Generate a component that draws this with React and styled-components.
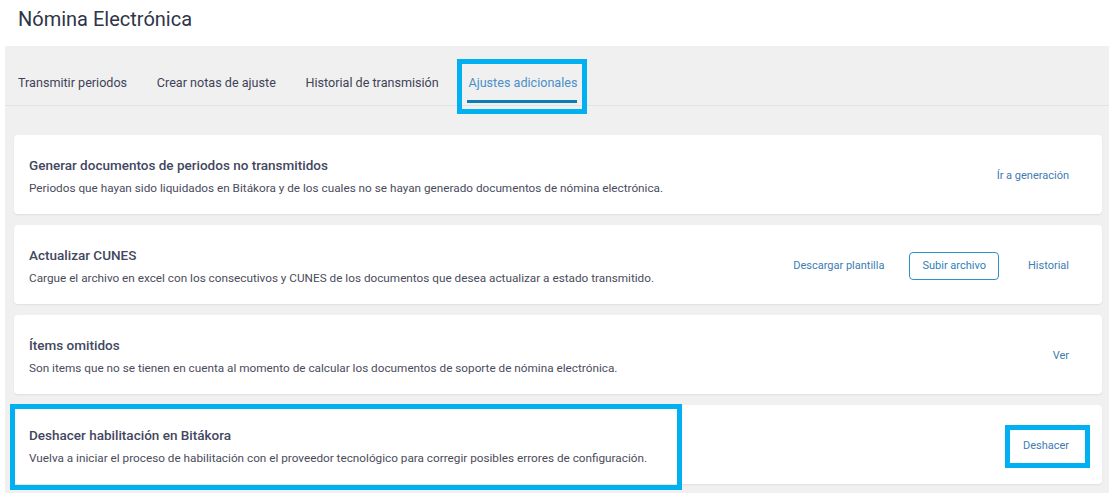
import React from "react";
import styled, { createGlobalStyle } from "styled-components";

const GlobalStyle = createGlobalStyle`
  html, body { margin: 0; padding: 0; background: #ffffff; }
  body { font-family: Roboto, "Noto Sans", Arial, sans-serif; -webkit-font-smoothing: antialiased; }
  * { box-sizing: border-box; }
`;

const Page = styled.div`
  width: 1113px;
  padding: 0 4px 0 5px;
`;

const Header = styled.header`
  height: 46px;
  padding: 6px 0 0 13px;
`;

const Title = styled.h1`
  margin: 0;
  font-size: 20px;
  line-height: 26px;
  font-weight: 400;
  color: #2f3448;
`;

const Panel = styled.section`
  background: #f0f0f0;
  padding-bottom: 9px;
`;

const TabBar = styled.nav`
  display: flex;
  gap: 29.7px;
  padding-left: 13px;
  border-bottom: 1px solid #e2e3e6;
`;

const Tab = styled.div`
  position: relative;
  display: flex;
  flex-direction: column;
  padding-top: 27px;
  font-size: 12.6px;
  line-height: 20px;
  color: ${(p) => (p.$active ? "#4b8fc6" : "#3f4357")};
  white-space: nowrap;
  &::after {
    content: "";
    display: block;
    margin-top: 7px;
    margin-bottom: 2px;
    height: 3px;
    margin-left: -1px;
    background: ${(p) => (p.$active ? "#0d7db6" : "transparent")};
  }
`;

const Highlight = styled.span`
  position: absolute;
  border: 5px solid #00b0f0;
  pointer-events: none;
  top: ${(p) => p.$top};
  bottom: ${(p) => p.$bottom};
  left: ${(p) => p.$left};
  right: ${(p) => p.$right || "auto"};
  width: ${(p) => p.$width || "auto"};
`;

const CardList = styled.div`
  display: flex;
  flex-direction: column;
  gap: 11px;
  padding: 29px 7px 0 9px;
`;

const Card = styled.article`
  position: relative;
  height: 79px;
  background: #ffffff;
  border-radius: 4px;
  box-shadow: 0 1px 2px rgba(0, 0, 0, 0.07);
  display: flex;
  align-items: center;
  justify-content: space-between;
  padding: 2px 33px 0 15px;
`;

const CardText = styled.div`
  display: flex;
  flex-direction: column;
  gap: 6px;
`;

const CardTitle = styled.h2`
  margin: 0;
  font-size: 13.5px;
  line-height: 18px;
  font-weight: 500;
  color: #434760;
`;

const CardDesc = styled.p`
  margin: 0;
  font-size: 11.75px;
  line-height: 16px;
  color: #4a4c5c;
`;

const Actions = styled.div`
  display: flex;
  align-items: center;
`;

const LinkAction = styled.span`
  position: relative;
  font-size: 11px;
  line-height: 16px;
  color: #3d7cb4;
  white-space: nowrap;
  cursor: pointer;
`;

const OutlineButton = styled.button`
  height: 28px;
  padding: 0 12px;
  margin: 0 29px 0 25px;
  border: 1px solid #2b93c5;
  border-radius: 4px;
  background: #ffffff;
  font-family: inherit;
  font-size: 11px;
  color: #2f7fb9;
  cursor: pointer;
`;

const items = [
  {
    title: "Generar documentos de periodos no transmitidos",
    desc: "Periodos que hayan sido liquidados en Bitákora y de los cuales no se hayan generado documentos de nómina electrónica.",
    kind: "single",
    label: "Ír a generación",
  },
  {
    title: "Actualizar CUNES",
    desc: "Cargue el archivo en excel con los consecutivos y CUNES de los documentos que desea actualizar a estado transmitido.",
    kind: "cunes",
  },
  {
    title: "Ítems omitidos",
    desc: "Son items que no se tienen en cuenta al momento de calcular los documentos de soporte de nómina electrónica.",
    kind: "single",
    label: "Ver",
  },
  {
    title: "Deshacer habilitación en Bitákora",
    desc: "Vuelva a iniciar el proceso de habilitación con el proveedor tecnológico para corregir posibles errores de configuración.",
    kind: "single",
    label: "Deshacer",
    highlight: true,
  },
];

const tabs = [
  "Transmitir periodos",
  "Crear notas de ajuste",
  "Historial de transmisión",
  "Ajustes adicionales",
];

export default function App() {
  return (
    <>
      <GlobalStyle />
      <Page>
        <Header>
          <Title>Nómina Electrónica</Title>
        </Header>
        <Panel>
          <TabBar>
            {tabs.map((t, i) => (
              <Tab key={t} $active={i === 3}>
                {t}
                {i === 3 && (
                  <Highlight $top="13px" $bottom="-9px" $left="-11px" $right="-10px" />
                )}
              </Tab>
            ))}
          </TabBar>
          <CardList>
            {items.map((it) => (
              <Card key={it.title}>
                {it.highlight && (
                  <Highlight $top="-1px" $bottom="-6px" $left="-4px" $width="672px" />
                )}
                <CardText>
                  <CardTitle>{it.title}</CardTitle>
                  <CardDesc>{it.desc}</CardDesc>
                </CardText>
                <Actions>
                  {it.kind === "cunes" ? (
                    <>
                      <LinkAction>Descargar plantilla</LinkAction>
                      <OutlineButton>Subir archivo</OutlineButton>
                      <LinkAction>Historial</LinkAction>
                    </>
                  ) : (
                    <LinkAction>
                      {it.label}
                      {it.highlight && (
                        <Highlight $top="-13px" $bottom="-14px" $left="-18px" $right="-21px" />
                      )}
                    </LinkAction>
                  )}
                </Actions>
              </Card>
            ))}
          </CardList>
        </Panel>
      </Page>
    </>
  );
}
